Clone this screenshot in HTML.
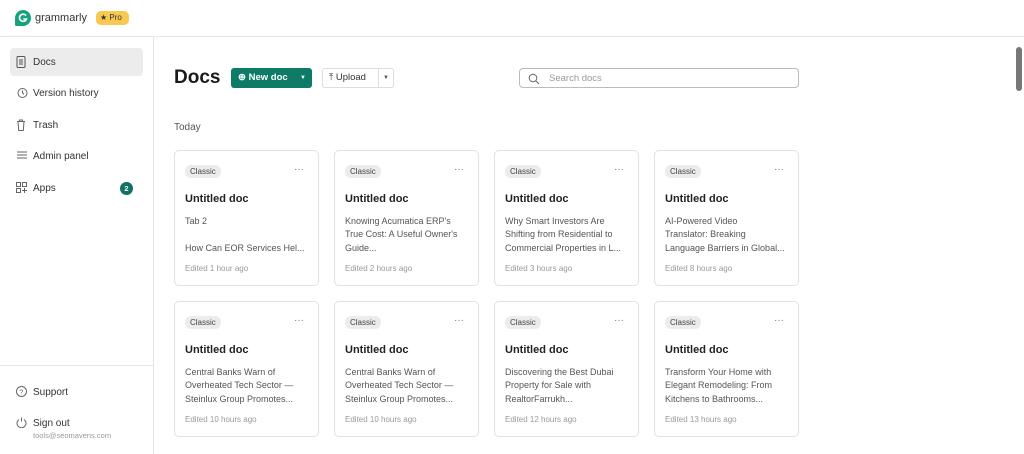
<!DOCTYPE html><html><head><style>
*{box-sizing:border-box;margin:0;padding:0}
body{width:1024px;height:454px;overflow:hidden;background:#fff;font-family:"Liberation Sans",sans-serif;color:#1f1f1f;position:relative}
.top{position:absolute;left:0;top:0;width:1024px;height:37px;border-bottom:1px solid #e6e6e6}
.side{position:absolute;left:0;top:37px;width:154px;height:417px;border-right:1px solid #e6e6e6}
.nav{position:absolute;left:10px;width:133px;height:28px;border-radius:4px;font-size:10px;display:flex;align-items:center;padding-left:23px;color:#333}
.nav svg{position:absolute;left:6px;top:8px}
.card{position:absolute;width:145px;height:136px;border:1px solid #e2e2e2;border-radius:5px;background:#fff}
.badge{position:absolute;left:10px;top:14px;height:13px;padding:0 5px;background:#ececec;border-radius:6px;font-size:8px;line-height:13px;color:#444}
.dots{position:absolute;right:14px;top:13px;font-size:10px;color:#777}
.tt{position:absolute;left:10px;top:42px;font-size:11px;font-weight:bold;color:#222}
.tx{position:absolute;left:10px;top:64px;width:130px;font-size:9px;line-height:13.3px;color:#555;white-space:nowrap}
.ed{position:absolute;left:10px;top:113px;font-size:8px;color:#999}
</style></head><body>
<div class="top">
<svg style="position:absolute;left:15px;top:10px" width="16" height="16" viewBox="0 0 16 16"><path d="M8 0a8 8 0 1 1 0 16H1.5A1.5 1.5 0 0 1 0 14.5V8a8 8 0 0 1 8-8z" fill="#15a37f"/><path d="M11 5.6A3.6 3.6 0 1 0 11.5 9H8.3" fill="none" stroke="#fff" stroke-width="1.6"/></svg>
<div style="position:absolute;left:35px;top:12px;font-size:11px;color:#333">grammarly</div>
<div style="position:absolute;left:96px;top:11px;width:33px;height:14px;background:#f9c850;border-radius:5px;font-size:8px;line-height:14px;padding-left:4px;color:#333">★ Pro</div>
</div>
<div class="side">
<div class="nav" style="top:11px;background:#ececec">Docs<svg width="10" height="12" viewBox="0 0 10 12"><rect x="1" y=".5" width="8" height="11" rx="1" fill="none" stroke="#555"/><path d="M3 4h4M3 6h4M3 8h4" stroke="#555"/></svg></div>
<div class="nav" style="top:42px">Version history<svg width="12" height="12" viewBox="0 0 12 12"><circle cx="6.5" cy="6" r="4.5" fill="none" stroke="#666"/><path d="M6.5 3.5V6l1.5 1.2" stroke="#666" fill="none"/></svg></div>
<div class="nav" style="top:74px">Trash<svg width="10" height="12" viewBox="0 0 10 12"><path d="M1 2.5h8M3.5 2.5V1h3v1.5M2 2.5l.7 9h4.6l.7-9" fill="none" stroke="#666"/></svg></div>
<div class="nav" style="top:105px">Admin panel<svg width="12" height="10" viewBox="0 0 12 10"><path d="M1 2h10M1 5h10M1 8h10" stroke="#666"/></svg></div>
<div class="nav" style="top:137px">Apps<svg width="11" height="11" viewBox="0 0 11 11"><rect x=".5" y=".5" width="4" height="4" fill="none" stroke="#666"/><rect x="6.5" y=".5" width="4" height="4" fill="none" stroke="#666"/><rect x=".5" y="6.5" width="4" height="4" fill="none" stroke="#666"/><path d="M8.5 6v5M6 8.5h5" stroke="#666"/></svg>
<div style="position:absolute;right:10px;top:8px;width:13px;height:13px;border-radius:50%;background:#0e7363;color:#fff;font-size:7.5px;font-weight:bold;text-align:center;line-height:13px">2</div></div>
<div style="position:absolute;left:0;top:328px;width:153px;border-top:1px solid #e6e6e6"></div>
<div class="nav" style="top:341px">Support<svg width="11" height="11" viewBox="0 0 11 11"><circle cx="5.5" cy="5.5" r="5" fill="none" stroke="#666"/><text x="3.3" y="8.3" font-size="7.5" fill="#666" font-family="Liberation Sans">?</text></svg></div>
<div class="nav" style="top:372px">Sign out<svg width="11" height="11" viewBox="0 0 11 11"><path d="M3 2.5A4.5 4.5 0 1 0 8 2.5M5.5 .5v4" fill="none" stroke="#666"/></svg></div>
<div style="position:absolute;left:33px;top:394px;font-size:7.5px;color:#999">tools@seomavens.com</div>
</div>
<div style="position:absolute;left:174px;top:67px;font-size:19px;font-weight:bold;color:#1a1a1a">Docs</div>
<div style="position:absolute;left:231px;top:68px;width:81px;height:20px;background:#0e7b67;border-radius:3px;color:#fff;font-size:9.5px;font-weight:bold;line-height:20px;padding-left:7px">⊕ New doc<span style="position:absolute;right:6px;font-size:6px">▼</span></div>
<div style="position:absolute;left:322px;top:68px;width:72px;height:20px;border:1px solid #ddd;border-radius:3px;font-size:9.5px;line-height:18px;padding-left:6px;color:#333">⤒ Upload<span style="position:absolute;left:55px;top:0;height:18px;border-left:1px solid #ddd;padding-left:4px;font-size:6px;color:#555">▼</span></div>
<div style="position:absolute;left:519px;top:68px;width:280px;height:20px;border:1px solid #bbb;border-radius:4px"><svg style="position:absolute;left:8px;top:4px" width="12" height="12" viewBox="0 0 12 12"><circle cx="5" cy="5" r="3.8" fill="none" stroke="#666"/><path d="M8 8l3 3" stroke="#666"/></svg><span style="position:absolute;left:29px;top:4px;font-size:9.5px;color:#999">Search docs</span></div>
<div style="position:absolute;left:174px;top:122px;font-size:10px;color:#555">Today</div>
<div style="position:absolute;left:1016px;top:47px;width:6px;height:44px;background:#777;border-radius:3px"></div>

<div class="card" style="left:174px;top:150px"><div class="badge">Classic</div><div class="dots">···</div><div class="tt">Untitled doc</div><div class="tx">Tab 2<br><br>How Can EOR Services Hel...</div><div class="ed">Edited 1 hour ago</div></div>
<div class="card" style="left:334px;top:150px"><div class="badge">Classic</div><div class="dots">···</div><div class="tt">Untitled doc</div><div class="tx">Knowing Acumatica ERP's<br>True Cost: A Useful Owner's<br>Guide...</div><div class="ed">Edited 2 hours ago</div></div>
<div class="card" style="left:494px;top:150px"><div class="badge">Classic</div><div class="dots">···</div><div class="tt">Untitled doc</div><div class="tx">Why Smart Investors Are<br>Shifting from Residential to<br>Commercial Properties in L...</div><div class="ed">Edited 3 hours ago</div></div>
<div class="card" style="left:654px;top:150px"><div class="badge">Classic</div><div class="dots">···</div><div class="tt">Untitled doc</div><div class="tx">AI-Powered Video<br>Translator: Breaking<br>Language Barriers in Global...</div><div class="ed">Edited 8 hours ago</div></div>
<div class="card" style="left:174px;top:301px"><div class="badge">Classic</div><div class="dots">···</div><div class="tt">Untitled doc</div><div class="tx">Central Banks Warn of<br>Overheated Tech Sector —<br>Steinlux Group Promotes...</div><div class="ed">Edited 10 hours ago</div></div>
<div class="card" style="left:334px;top:301px"><div class="badge">Classic</div><div class="dots">···</div><div class="tt">Untitled doc</div><div class="tx">Central Banks Warn of<br>Overheated Tech Sector —<br>Steinlux Group Promotes...</div><div class="ed">Edited 10 hours ago</div></div>
<div class="card" style="left:494px;top:301px"><div class="badge">Classic</div><div class="dots">···</div><div class="tt">Untitled doc</div><div class="tx">Discovering the Best Dubai<br>Property for Sale with<br>RealtorFarrukh...</div><div class="ed">Edited 12 hours ago</div></div>
<div class="card" style="left:654px;top:301px"><div class="badge">Classic</div><div class="dots">···</div><div class="tt">Untitled doc</div><div class="tx">Transform Your Home with<br>Elegant Remodeling: From<br>Kitchens to Bathrooms...</div><div class="ed">Edited 13 hours ago</div></div>
</body></html>
